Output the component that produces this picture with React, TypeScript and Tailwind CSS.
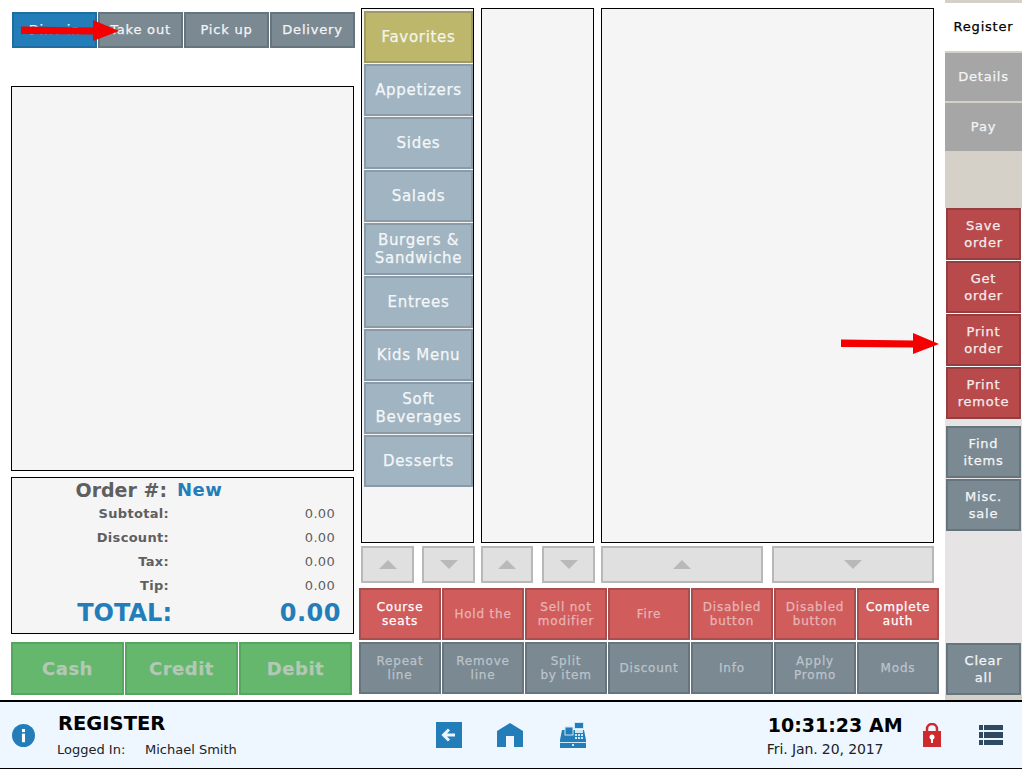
import React from 'react';

const ORDER_TYPES = ['Dine in', 'Take out', 'Pick up', 'Delivery'];
const CATEGORIES = ['Appetizers', 'Sides', 'Salads', 'Burgers &\nSandwiche', 'Entrees', 'Kids Menu', 'Soft\nBeverages', 'Desserts'];
const RED_ROW = [
  { label: 'Course\nseats', on: true },
  { label: 'Hold the', on: false },
  { label: 'Sell not\nmodifier', on: false },
  { label: 'Fire', on: false },
  { label: 'Disabled\nbutton', on: false },
  { label: 'Disabled\nbutton', on: false },
  { label: 'Complete\nauth', on: true },
];
const GRAY_ROW = ['Repeat\nline', 'Remove\nline', 'Split\nby item', 'Discount', 'Info', 'Apply\nPromo', 'Mods'];
const TOTALS = ['Subtotal:', 'Discount:', 'Tax:', 'Tip:'];

function Btn({ className, children }: { className: string; children: React.ReactNode }) {
  return (
    <div className={`flex items-center justify-center text-center border-[2px] whitespace-pre-line [-webkit-text-stroke:0.25px] ${className}`}>
      <span>{children}</span>
    </div>
  );
}

function Triangle({ down }: { down?: boolean }) {
  return (
    <svg width="18" height="9" viewBox="0 0 18 9">
      <polygon points={down ? '0,0 18,0 9,9' : '0,9 18,9 9,0'} fill="#b9b9b9" />
    </svg>
  );
}

function Pager({ className, down }: { className: string; down?: boolean }) {
  return (
    <div className={`h-[37px] flex items-center justify-center bg-[#e0e0e0] border-[2px] border-[#b8b8b8] ${className}`}>
      <Triangle down={down} />
    </div>
  );
}

function RedArrow({ className }: { className: string }) {
  return (
    <svg className={`absolute ${className}`} width="98" height="22" viewBox="0 0 98 22">
      <polygon points="0,6.5 72,7.5 72,0 98,11 72,21 72,14.5 0,14" fill="#f40000" />
    </svg>
  );
}

export default function App() {
  return (
    <div className="relative w-[1022px] h-[769px] overflow-hidden bg-white flex flex-col font-['DejaVu_Sans','Liberation_Sans',sans-serif]">
      <div className="h-[700px] flex">
        {/* Left: order */}
        <div className="w-[359px] pl-[11px] flex flex-col">
          <div className="mt-[12px] pl-[1px] h-[36px] flex gap-[1px]">
            {ORDER_TYPES.map((t, i) => (
              <Btn
                key={t}
                className={`w-[85px] text-[13px] tracking-[0.8px] text-[#f3f5f6] ${i === 0 ? 'bg-[#237db8] border-[#1f6d9f]' : 'bg-[#7b8993] border-[#66747d]'}`}
              >
                {t}
              </Btn>
            ))}
          </div>
          <div className="mt-[38px] w-[343px] h-[385px] border border-black bg-[#f5f5f5]" />
          <div className="mt-[6px] w-[343px] h-[157px] border border-black bg-[#f5f5f5]">
            <div className="h-[24px] flex items-center">
              <span className="w-[155px] text-right text-[19px] font-bold text-[#5f5f5f] pt-[1px]">Order #:</span>
              <span className="ml-[10px] text-[18px] font-bold text-[#237db8] tracking-[0.5px] -mt-[2px]">New</span>
            </div>
            {TOTALS.map((t) => (
              <div key={t} className="h-[24px] flex items-center">
                <span className="w-[157px] text-right text-[13px] font-bold text-[#5f5f5f] tracking-[0.3px]">{t}</span>
                <span className="w-[166px] text-right text-[13px] text-[#5f5f5f] tracking-[0.3px] -mt-[1px]">0.00</span>
              </div>
            ))}
            <div className="h-[32px] flex items-center -mt-[1px]">
              <span className="w-[160px] text-right text-[24px] font-bold text-[#237db8]">TOTAL:</span>
              <span className="w-[169px] text-right text-[24px] font-bold text-[#237db8] tracking-[0.5px]">0.00</span>
            </div>
          </div>
          <div className="mt-[8px] h-[53px] flex gap-[1px]">
            {['Cash', 'Credit', 'Debit'].map((t) => (
              <Btn key={t} className="w-[113px] bg-[#64b76c] border-[#57a65f] text-[18px] font-bold tracking-[0.5px] text-[#b3c8b5]">
                {t}
              </Btn>
            ))}
          </div>
        </div>

        {/* Middle: menu and actions */}
        <div className="w-[580px] flex flex-col">
          <div className="mt-[8px] pl-[2px] h-[535px] flex gap-[7px]">
            <div className="w-[113px] border border-black bg-[#f5f5f5] pl-[2px] pt-[2px] flex flex-col gap-[1px]">
              <Btn className="h-[52px] bg-[#bdb76b] border-[#9e9a68] text-[15px] tracking-[0.7px] text-[#f4f4ea]">Favorites</Btn>
              {CATEGORIES.map((c) => (
                <Btn key={c} className="h-[52px] bg-[#a0b4c1] border-[#8a9ba7] text-[15px] leading-[18px] tracking-[0.7px] text-[#f4f7f9]">
                  {c}
                </Btn>
              ))}
            </div>
            <div className="w-[113px] border border-black bg-[#f5f5f5]" />
            <div className="w-[333px] border border-black bg-[#f5f5f5]" />
          </div>
          <div className="mt-[3px] pl-[2px] flex">
            <Pager className="w-[53px]" />
            <Pager className="w-[53px] ml-[8px]" down />
            <Pager className="w-[52px] ml-[6px]" />
            <Pager className="w-[53px] ml-[9px]" down />
            <Pager className="w-[162px] ml-[6px]" />
            <Pager className="w-[162px] ml-[9px]" down />
          </div>
          <div className="mt-[5px] h-[52px] flex gap-[1px]">
            {RED_ROW.map((b, i) => (
              <Btn
                key={i}
                className={`w-[82px] bg-[#d15c5c] border-[#a94e4e] text-[12px] leading-[14px] tracking-[0.8px] ${b.on ? 'text-white' : 'text-[#e8b4b4]'}`}
              >
                {b.label}
              </Btn>
            ))}
          </div>
          <div className="mt-[2px] h-[52px] flex gap-[1px]">
            {GRAY_ROW.map((t) => (
              <Btn key={t} className="w-[82px] bg-[#7b8993] border-[#66747d] text-[12px] leading-[14px] tracking-[0.8px] text-[#bcc4ca]">
                {t}
              </Btn>
            ))}
          </div>
        </div>

        {/* Right: tabs and side actions */}
        <div className="ml-[6px] w-[77px] bg-[#e6e4e4] flex flex-col">
          <div className="h-[3px] bg-[#d5d1c9]" />
          <div className="h-[48px] bg-white flex items-center justify-center text-[13px] tracking-[0.8px] text-black [-webkit-text-stroke:0.25px]">Register</div>
          <div className="h-[2px] bg-[#d5d1c9]" />
          <div className="h-[48px] bg-[#a6a6a6] flex items-center justify-center text-[13px] tracking-[0.8px] text-[#f4f4f4] [-webkit-text-stroke:0.25px]">Details</div>
          <div className="h-[2px] bg-[#d5d1c9]" />
          <div className="h-[48px] bg-[#a6a6a6] flex items-center justify-center text-[13px] tracking-[0.8px] text-[#f4f4f4] [-webkit-text-stroke:0.25px]">Pay</div>
          <div className="h-[57px] bg-[#d5d1c9]" />
          <div className="px-[1px] flex flex-col gap-[1px] bg-white">
            {['Save\norder', 'Get\norder', 'Print\norder', 'Print\nremote'].map((t) => (
              <Btn key={t} className="h-[52px] bg-[#b84a4c] border-[#953d3f] text-[13px] leading-[17px] tracking-[0.8px] text-[#f6ecec]">
                {t}
              </Btn>
            ))}
          </div>
          <div className="mt-[7px] px-[1px] flex flex-col gap-[1px]">
            {['Find\nitems', 'Misc.\nsale'].map((t) => (
              <Btn key={t} className="h-[52px] bg-[#7b8993] border-[#66747d] text-[13px] leading-[17px] tracking-[0.8px] text-[#f3f5f6]">
                {t}
              </Btn>
            ))}
          </div>
          <div className="mt-[112px] px-[1px]">
            <Btn className="h-[52px] bg-[#7b8993] border-[#66747d] text-[13px] leading-[17px] tracking-[0.8px] text-[#f3f5f6]">{'Clear\nall'}</Btn>
          </div>
          <div className="mt-auto h-[5px] bg-[#d5d1c9]" />
        </div>
      </div>

      {/* Footer */}
      <div className="h-[69px] border-t-[2px] border-b border-black bg-[#eef7ff] flex items-center">
        <svg className="ml-[12px]" width="23" height="23" viewBox="0 0 24 24">
          <circle cx="12" cy="12" r="12" fill="#237db8" />
          <rect x="10.4" y="10" width="3.2" height="9" fill="#fff" />
          <rect x="10.4" y="5.2" width="3.2" height="3.2" fill="#fff" />
        </svg>
        <div className="ml-[23px] flex flex-col">
          <span className="text-[19.5px] font-bold leading-[22px] text-black">REGISTER</span>
          <div className="mt-[7px] -ml-[1px] flex text-[13px] leading-[16px] text-[#222]">
            <span className="w-[88px]">Logged In:</span>
            <span>Michael Smith</span>
          </div>
        </div>
        <div className="ml-[199px] flex items-center">
          <svg width="26" height="26" viewBox="0 0 26 26">
            <rect width="26" height="26" fill="#237db8" />
            <path d="M19 13H8M13 7.5 7.5 13 13 18.5" fill="none" stroke="#e9f5ff" strokeWidth="3" />
          </svg>
          <svg className="ml-[35px]" width="26" height="24" viewBox="0 0 26 24">
            <path d="M13 0 26 8V24H17V13H9V24H0V8Z" fill="#237db8" />
          </svg>
          <svg className="ml-[37px]" width="26" height="26" viewBox="0 0 26 26">
            <path d="M6 5H13V8H24L26 18V26H0V18L2 8H6Z" fill="#237db8" />
            <rect x="14.5" y="0.5" width="9" height="6" fill="#237db8" stroke="#cfe6f5" />
            <rect x="5" y="5" width="8" height="8" fill="#237db8" stroke="#cfe6f5" />
            <rect x="15" y="8" width="8" height="3" fill="#cfe6f5" />
            <path d="M15 12h2v2h-2zM18 12h2v2h-2zM21 12h2v2h-2zM15 15h2v2h-2zM18 15h2v2h-2zM21 15h2v2h-2z" fill="#cfe6f5" />
            <rect x="0" y="20" width="26" height="1" fill="#cfe6f5" />
            <rect x="12" y="22" width="2" height="2" fill="#cfe6f5" />
          </svg>
        </div>
        <div className="ml-[182px] flex flex-col">
          <span className="text-[19px] font-bold leading-[22px] text-black whitespace-nowrap">10:31:23 AM</span>
          <span className="mt-[5px] -ml-[1px] text-[14px] tracking-[-0.1px] leading-[16px] text-[#222] whitespace-nowrap">Fri. Jan. 20, 2017</span>
        </div>
        <svg className="ml-[20px]" width="18" height="24" viewBox="0 0 18 24">
          <path d="M4 10V6a5 5 0 0 1 10 0v4" fill="none" stroke="#cd2a2e" strokeWidth="2.5" />
          <rect y="8" width="18" height="16" fill="#cd2a2e" />
          <circle cx="9" cy="14" r="2.5" fill="#fff" />
          <rect x="8" y="14" width="2" height="6" fill="#fff" />
        </svg>
        <svg className="ml-[38px]" width="24" height="20" viewBox="0 0 24 20">
          <path d="M0 0h4v5H0zM5 0h19v5H5zM0 7h4v6H0zM5 7h19v6H5zM0 15h4v5H0zM5 15h19v5H5z" fill="#2e4a63" />
        </svg>
      </div>

      <RedArrow className="left-[21px] top-[20px]" />
      <RedArrow className="left-[841px] top-[333px]" />
    </div>
  );
}
